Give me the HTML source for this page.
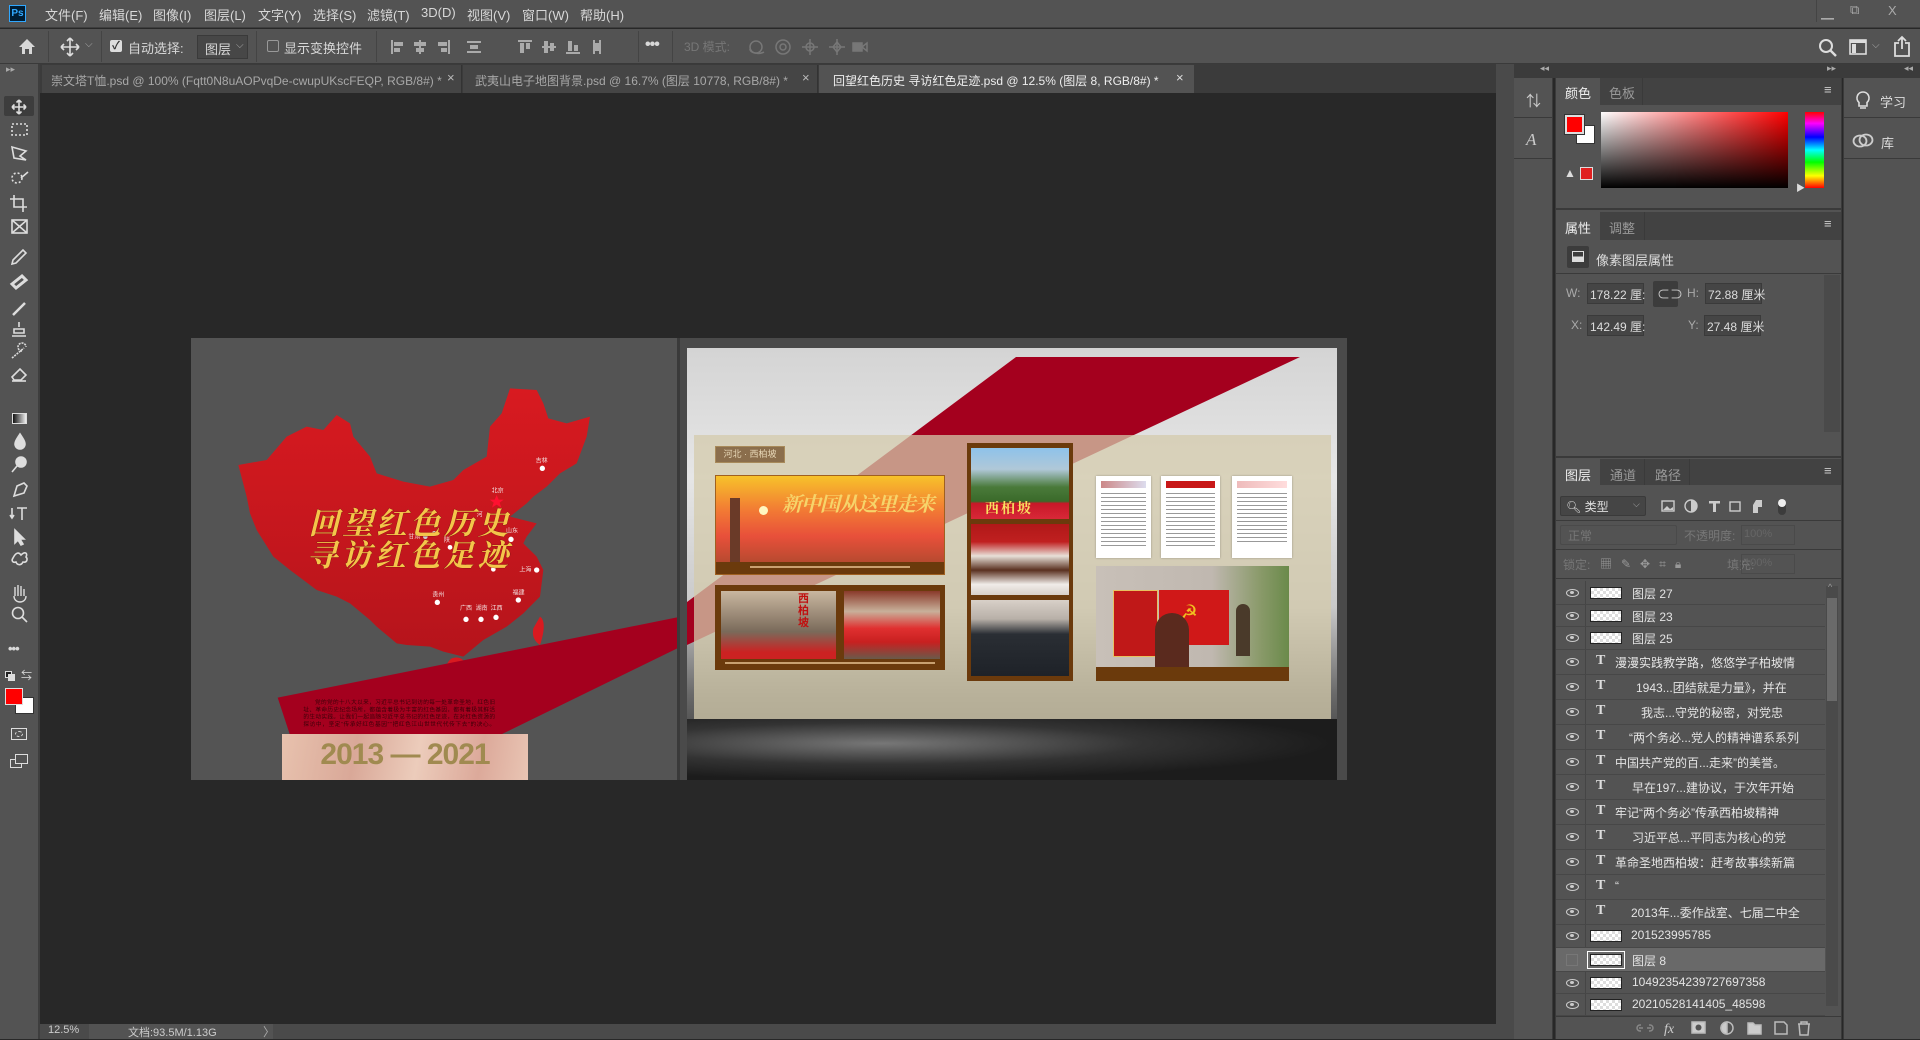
<!DOCTYPE html>
<html><head><meta charset="utf-8">
<style>
*{margin:0;padding:0;box-sizing:border-box}
body{width:1920px;height:1039px;overflow:hidden;background:#282828;font-family:"Liberation Sans","Noto Sans CJK SC",sans-serif;color:#d8d8d8;font-size:13px;position:relative}
.a{position:absolute}
.t{position:absolute;white-space:nowrap}
.tb{font-size:12px}
svg{display:block}
</style></head><body>

<!-- menu bar -->
<div class="a" style="left:0;top:0;width:1920px;height:28px;background:#535353;border-bottom:1px solid #3e3e3e"></div>
<div class="a" style="left:9px;top:5px;width:17px;height:17px;background:#001d34;border:1px solid #31a8ff;color:#31a8ff;font-size:10px;line-height:15px;text-align:center;font-weight:bold">Ps</div>
<div class="t" style="left:45px;top:5px">文件(F)</div>
<div class="t" style="left:99px;top:5px">编辑(E)</div>
<div class="t" style="left:153px;top:5px">图像(I)</div>
<div class="t" style="left:204px;top:5px">图层(L)</div>
<div class="t" style="left:258px;top:5px">文字(Y)</div>
<div class="t" style="left:313px;top:5px">选择(S)</div>
<div class="t" style="left:367px;top:5px">滤镜(T)</div>
<div class="t" style="left:421px;top:5px">3D(D)</div>
<div class="t" style="left:467px;top:5px">视图(V)</div>
<div class="t" style="left:522px;top:5px">窗口(W)</div>
<div class="t" style="left:580px;top:5px">帮助(H)</div>
<div class="a" style="left:1816px;top:0;width:98px;height:22px;border-left:1px solid #444"></div>
<div class="t" style="left:1821px;top:3px;color:#aaa">▁</div>
<div class="t" style="left:1850px;top:2px;color:#aaa;font-size:13px">⧉</div>
<div class="t" style="left:1888px;top:3px;color:#aaa">X</div>

<!-- options bar -->
<div class="a" style="left:0;top:29px;width:1920px;height:35px;background:#535353;border-bottom:1px solid #3a3a3a"></div>
<svg class="a" style="left:18px;top:38px" width="18" height="17" viewBox="0 0 18 17"><path d="M9 1 L17 9 H14 V16 H11 V11 H7 V16 H4 V9 H1 Z" fill="#d8d8d8"/></svg>
<div class="a" style="left:48px;top:31px;width:1px;height:31px;background:#444"></div>
<svg class="a" style="left:60px;top:37px" width="20" height="20" viewBox="0 0 20 20"><path d="M10 1V19M1 10H19M10 1l-3 3M10 1l3 3M10 19l-3-3M10 19l3-3M1 10l3-3M1 10l3 3M19 10l-3-3M19 10l-3 3" stroke="#ddd" stroke-width="1.6" fill="none"/></svg>
<div class="t" style="left:85px;top:39px;color:#aaa;font-size:10px">⌵</div>
<div class="a" style="left:101px;top:31px;width:1px;height:31px;background:#444"></div>
<div class="a" style="left:110px;top:40px;width:12px;height:12px;background:#ddd;border-radius:2px"></div>
<div class="t" style="left:112px;top:37px;color:#333;font-size:11px;font-weight:bold">✓</div>
<div class="t" style="left:128px;top:38px">自动选择:</div>
<div class="a" style="left:197px;top:35px;width:51px;height:24px;background:#474747;border:1px solid #3a3a3a"></div>
<div class="t" style="left:205px;top:39px">图层</div>
<div class="t" style="left:236px;top:40px;color:#aaa;font-size:10px">⌵</div>
<div class="a" style="left:256px;top:31px;width:1px;height:31px;background:#444"></div>
<div class="a" style="left:267px;top:40px;width:12px;height:12px;border:1px solid #999;border-radius:2px"></div>
<div class="t" style="left:284px;top:38px">显示变换控件</div>
<div class="a" style="left:376px;top:31px;width:1px;height:31px;background:#444"></div>
<svg class="a" style="left:388px;top:38px" width="230" height="18" viewBox="0 0 230 18" fill="#aaa">
<rect x="3" y="2" width="2" height="14"/><rect x="6" y="4" width="9" height="4"/><rect x="6" y="10" width="6" height="4"/>
<rect x="31" y="2" width="2" height="14"/><rect x="26" y="4" width="12" height="4"/><rect x="28" y="10" width="8" height="4"/>
<rect x="60" y="2" width="2" height="14"/><rect x="50" y="4" width="9" height="4"/><rect x="53" y="10" width="6" height="4"/>
<rect x="79" y="3" width="14" height="2"/><rect x="82" y="7" width="8" height="4"/><rect x="79" y="13" width="14" height="2"/>
<rect x="130" y="2" width="14" height="2"/><rect x="132" y="5" width="4" height="10"/><rect x="138" y="5" width="4" height="6"/>
<rect x="154" y="8" width="14" height="2"/><rect x="156" y="3" width="4" height="12"/><rect x="162" y="5" width="4" height="8"/>
<rect x="178" y="14" width="14" height="2"/><rect x="180" y="3" width="4" height="10"/><rect x="186" y="7" width="4" height="6"/>
<rect x="205" y="2" width="2" height="14"/><rect x="211" y="2" width="2" height="14"/><rect x="207" y="5" width="4" height="8"/>
</svg>
<div class="a" style="left:638px;top:31px;width:1px;height:31px;background:#444"></div>
<div class="t" style="left:645px;top:36px;font-size:16px;font-weight:bold;letter-spacing:-1px">•••</div>
<div class="a" style="left:672px;top:31px;width:1px;height:31px;background:#444"></div>
<div class="t" style="left:684px;top:38px;color:#777;font-size:12px">3D 模式:</div>
<svg class="a" style="left:745px;top:36px" width="125" height="22" viewBox="0 0 125 22" stroke="#777" fill="none" stroke-width="1.5">
<circle cx="11" cy="11" r="6"/><path d="M5 13a8 4 0 0 0 14 3"/>
<circle cx="38" cy="11" r="7"/><circle cx="38" cy="11" r="3"/>
<path d="M65 3V19M57 11H73"/><circle cx="65" cy="11" r="4"/>
<path d="M92 3V19M84 11H100"/><path d="M92 6l4 5-4 5-4-5z"/>
<rect x="108" y="7" width="9" height="8" fill="#777"/><path d="M117 11l5-4v8z"/>
</svg>
<svg class="a" style="left:1818px;top:38px" width="20" height="20" viewBox="0 0 20 20"><circle cx="8" cy="8" r="6" stroke="#ddd" stroke-width="2" fill="none"/><path d="M12 12l6 6" stroke="#ddd" stroke-width="2.4"/></svg>
<svg class="a" style="left:1849px;top:39px" width="18" height="16" viewBox="0 0 18 16"><rect x="1" y="1" width="16" height="14" stroke="#ddd" stroke-width="1.6" fill="none"/><rect x="1" y="1" width="16" height="3" fill="#ddd"/><rect x="3" y="5" width="4" height="9" fill="#ddd"/></svg>
<div class="t" style="left:1872px;top:40px;color:#aaa;font-size:10px">⌵</div>
<svg class="a" style="left:1893px;top:35px" width="18" height="22" viewBox="0 0 18 22"><path d="M6 8H2V21H16V8H12M9 14V2M5 6l4-4 4 4" stroke="#ddd" stroke-width="1.8" fill="none"/></svg>

<!-- tabs bar -->
<div class="a" style="left:40px;top:64px;width:1474px;height:29px;background:#3b3b3b"></div>
<div class="a" style="left:42px;top:65px;width:420px;height:28px;background:#454545;border-right:1px solid #333"></div>
<div class="t tb" style="left:51px;top:72px;color:#a8a8a8">崇文塔T恤.psd @ 100% (Fqtt0N8uAOPvqDe-cwupUKscFEQP, RGB/8#) *</div>
<div class="t" style="left:447px;top:70px;color:#bbb">×</div>
<div class="a" style="left:463px;top:65px;width:355px;height:28px;background:#454545;border-right:1px solid #333"></div>
<div class="t tb" style="left:475px;top:72px;color:#a8a8a8">武夷山电子地图背景.psd @ 16.7% (图层 10778, RGB/8#) *</div>
<div class="t" style="left:802px;top:70px;color:#bbb">×</div>
<div class="a" style="left:819px;top:65px;width:375px;height:28px;background:#535353"></div>
<div class="t tb" style="left:833px;top:72px;color:#eee">回望红色历史 寻访红色足迹.psd @ 12.5% (图层 8, RGB/8#) *</div>
<div class="t" style="left:1176px;top:70px;color:#ddd">×</div>

<!-- left toolbar -->
<div class="a" style="left:0;top:64px;width:40px;height:975px;background:#535353;border-right:2px solid #3e3e3e"></div>
<div class="t" style="left:6px;top:64px;color:#aaa;font-size:9px">▸▸</div>
<div class="a" style="left:4px;top:96px;width:30px;height:20px;background:#3d3d3d;border-radius:2px"></div>
<svg class="a" style="left:8px;top:96px" width="26" height="680" viewBox="0 0 26 680" stroke="#ddd" fill="none" stroke-width="1.6">
<path d="M11 4V18M4 11H18M11 4l-2.5 2.5M11 4l2.5 2.5M11 18l-2.5-2.5M11 18l2.5-2.5M4 11l2.5-2.5M4 11l2.5 2.5M18 11l-2.5-2.5M18 11l-2.5 2.5"/>
<rect x="4" y="28" width="15" height="11" stroke-dasharray="2 2"/>
<path d="M4 51L18 55 12 60 18 64 6 62Z"/>
<circle cx="9" cy="82" r="5" stroke-dasharray="2 2"/><path d="M13 82l7-6"/>
<path d="M6 99V111H19M2 103H15V116"/>
<rect x="4" y="124" width="15" height="13"/><path d="M4 124l15 13M19 124L4 137"/>
<path d="M5 164l10-10 3 3-10 10-4 1z"/>
<path d="M4 188l10-8 4 4-10 8z" stroke-width="3"/>
<path d="M5 219l12-12" stroke-width="2.5"/>
<path d="M11 226v5M6 233h10v4H6zM4 240h14"/>
<path d="M4 262l12-10M14 255a4 4 0 1 1 4 -4" stroke-dasharray="2 1"/>
<path d="M4 281l8-8 6 6-5 5H6z"/><path d="M4 285H18"/>
</svg>
<div class="a" style="left:12px;top:413px;width:15px;height:11px;background:linear-gradient(90deg,#111,#eee);border:1px solid #ddd"></div>
<svg class="a" style="left:8px;top:430px" width="26" height="350" viewBox="0 0 26 350" stroke="#ddd" fill="none" stroke-width="1.6">
<path d="M12 4c-4 6-5 8-5 10a5 5 0 0 0 10 0c0-2-1-4-5-10z" fill="#ddd"/>
<circle cx="13" cy="32" r="5" fill="#ddd"/><path d="M9 36l-5 6"/>
<path d="M6 66l3-10 7-3 3 3-3 7-10 3z"/>
<path d="M4 78v10M2 85l2 3 2-3M9 78h10M14 78v12"/>
<path d="M7 100v13l3-3 3 5 2-1-3-5h4z" fill="#ddd"/>
<path d="M5 128c3-6 6-6 8-3 4-4 7-2 5 2 2 2 1 6-3 5-2 4-6 3-7 0-3 1-5-1-3-4z"/>
<path d="M7 166v-9m3 9v-11m3 11v-10m3 10v-7m-10 7c0 4 3 6 6 6s6-2 6-6" stroke-width="1.4"/>
<circle cx="10" cy="183" r="5.5"/><path d="M14 187l5 5"/>
</svg>
<div class="t" style="left:8px;top:641px;font-size:13px;font-weight:bold;letter-spacing:-1px">•••</div>
<div class="a" style="left:5px;top:671px;width:7px;height:7px;border:1px solid #ddd;background:#222"></div>
<div class="a" style="left:8px;top:674px;width:7px;height:7px;border:1px solid #ddd;background:#ddd"></div>
<div class="t" style="left:21px;top:667px;font-size:11px;color:#ddd">⇆</div>
<div class="a" style="left:15px;top:697px;width:19px;height:17px;background:#fff;border:1px solid #333"></div>
<div class="a" style="left:5px;top:688px;width:18px;height:17px;background:#ff0000;border:1px solid #ddd"></div>
<div class="a" style="left:11px;top:728px;width:16px;height:12px;border:1px solid #ddd"></div>
<div class="a" style="left:15px;top:731px;width:8px;height:6px;border:1px dashed #ddd;border-radius:50%"></div>
<div class="a" style="left:10px;top:759px;width:12px;height:9px;border:1px solid #ddd"></div>
<div class="a" style="left:15px;top:754px;width:13px;height:10px;border:1px solid #ddd;background:#535353"></div>

<!-- canvas gap strip -->
<div class="a" style="left:1496px;top:64px;width:18px;height:975px;background:#4a4a4a"></div>

<!-- ===== ARTWORK LEFT PAGE ===== -->
<div class="a" style="left:191px;top:338px;width:486px;height:442px;background:#545454;overflow:hidden">
<svg class="a" style="left:-1px;top:-8px" width="500" height="450" viewBox="0 0 1500 1350">
<defs><linearGradient id="mg" x1="0" y1="0" x2="0" y2="1"><stop offset="0" stop-color="#d81a20"/><stop offset="1" stop-color="#b5141b"/></linearGradient></defs>
<path d="M145 405L230 390 290 320 350 290 400 300 440 255 480 280 490 320 540 380 560 430 640 455 720 470 790 450 820 420 890 380 900 290 935 250 960 175 1040 180 1060 220 1075 265 1130 280 1200 260 1190 320 1160 400 1110 430 1070 470 1030 500 1010 520 960 560 1000 570 1040 580 1010 620 1000 640 1040 680 1060 720 1050 800 1020 830 1000 850 950 890 880 930 820 980 760 965 720 950 650 945 620 940 560 890 540 870 480 820 440 800 380 780 300 720 250 680 200 600 180 550 170 500Z" fill="url(#mg)"/>
<path d="M1050 860c15 10 15 40 0 85-15-10-25-25-20-50z" fill="#d81a20"/>
<path d="M785 985c30-10 45 10 40 35-10 20-40 25-55 10-5-15 0-35 15-45z" fill="#d81a20"/>
<path d="M263 1103L1462 862 1462 955 930 1215 300 1215Z" fill="#a4001e"/>
<path d="M1462 835L1500 820 1500 930 1462 950Z" fill="#a4001e"/>
<g font-family="Liberation Sans,Noto Sans CJK SC,sans-serif" font-size="18" fill="#f3dede">
<text x="1037" y="398">吉林</text><text x="905" y="488">北京</text><text x="860" y="560">河</text><text x="948" y="608">山东</text><text x="988" y="724">上海</text><text x="968" y="794">福建</text><text x="727" y="800">贵州</text><text x="810" y="840">广西</text><text x="857" y="840">湖南</text><text x="902" y="840">江西</text><text x="655" y="626">甘肃</text><text x="762" y="636">陕</text>
</g>
<g fill="#fff"><circle cx="1057" cy="415" r="8"/><circle cx="963" cy="628" r="8"/><circle cx="1040" cy="720" r="8"/><circle cx="910" cy="718" r="7"/><circle cx="985" cy="810" r="8"/><circle cx="742" cy="817" r="8"/><circle cx="828" cy="868" r="8"/><circle cx="873" cy="868" r="8"/><circle cx="918" cy="862" r="8"/><circle cx="706" cy="620" r="7" fill="#ccc"/><circle cx="733" cy="610" r="7" fill="#ccc"/><circle cx="780" cy="652" r="7"/></g>
<path d="M920 495l6 14h15l-12 9 5 15-14-9-14 9 5-15-12-9h15z" fill="#ff1030"/>
<g font-family="Liberation Serif,Noto Serif CJK SC,serif" font-size="92" font-weight="bold" font-style="italic" fill="#f4c54a" stroke="#7a1010" stroke-width="2" paint-order="stroke">
<text x="355" y="612" textLength="600">回望红色历史</text>
<text x="350" y="708" textLength="605">寻访红色足迹</text>
</g>
<g font-family="Liberation Sans,Noto Sans CJK SC,sans-serif" font-size="17" fill="#3a0008">
<text x="375" y="1122" textLength="540">党的党的十八大以来，习近平总书记到访的每一处革命圣地，红色旧</text>
<text x="340" y="1144" textLength="575">址、革命历史纪念场所，都蕴含着极为丰富的红色基因，都有着极其鲜活</text>
<text x="340" y="1166" textLength="575">的生动实践。让我们一起追随习近平总书记的红色足迹，在对红色资源的</text>
<text x="340" y="1188" textLength="575">探访中，坚定“传承好红色基因”“把红色江山世世代代传下去”的决心。</text>
</g>
</svg>
<div class="a" style="left:91px;top:396px;width:246px;height:46px;background:linear-gradient(100deg,#e8c2ae,#d9a898 30%,#ecccbb 55%,#dca99a 80%,#e9c5b4);"></div>
<div class="t" style="left:91px;top:400px;width:246px;text-align:center;font-family:'Liberation Sans Narrow','Liberation Sans',sans-serif;font-weight:bold;font-size:30px;color:#a08a50;letter-spacing:-1px">2013 — 2021</div>
</div>
<div class="a" style="left:677px;top:338px;width:3px;height:442px;background:#3a3a3a"></div>

<!-- ===== ARTWORK RIGHT PAGE ===== -->
<div class="a" style="left:680px;top:338px;width:667px;height:442px;background:#4a4a4a;overflow:hidden">
 <div class="a" style="left:7px;top:10px;width:650px;height:432px;background:linear-gradient(180deg,#d4d4d4 0%,#e6e6e6 30%,#c9c9c9 60%,#6a6a6a 80%,#2a2a2a 100%)"></div>
 <div class="a" style="left:7px;top:381px;width:650px;height:61px;background:radial-gradient(ellipse at 30% 40%,#777 0%,#333 40%,#1c1c1c 70%),#222"></div>
 <svg class="a" style="left:0;top:0" width="667" height="442"><path d="M336 19L620 19 7 307 7 264Z" fill="#a4001e"/></svg>
 <div class="a" style="left:14px;top:97px;width:637px;height:284px;background:rgba(212,202,172,0.74)"></div>
 <div class="a" style="left:35px;top:108px;width:70px;height:17px;background:#8b6e4c;border:1px solid #a88a5a;color:#e8d8b8;font-size:9px;line-height:15px;text-align:center">河北 · 西柏坡</div>
 <div class="a" style="left:35px;top:137px;width:230px;height:100px;background:#6b3a0c;border:1px solid #a06020"></div>
 <div class="a" style="left:36px;top:138px;width:228px;height:86px;background:linear-gradient(180deg,#f7c22a 0%,#f27a34 40%,#e8503a 70%,#b84a30 100%)"></div>
 <div class="a" style="left:79px;top:168px;width:9px;height:9px;border-radius:50%;background:#fff7c0"></div>
 <div class="a" style="left:50px;top:160px;width:10px;height:64px;background:#6a3a28"></div>
 <div class="t" style="left:102px;top:150px;color:#f6d46a;font-family:'Liberation Serif','Noto Serif CJK SC',serif;font-style:italic;font-weight:bold;font-size:20px;letter-spacing:-1px">新中国从这里走来</div>
 <div class="a" style="left:70px;top:228px;width:160px;height:2px;background:#caa070"></div>
 <div class="a" style="left:35px;top:247px;width:230px;height:85px;background:#6b3a0c"></div>
 <div class="a" style="left:41px;top:253px;width:115px;height:68px;background:linear-gradient(180deg,#c9b7a0,#7a6a5a 60%,#c22 90%)"></div>
 <div class="t" style="left:118px;top:255px;color:#c01010;font-weight:bold;font-size:11px;line-height:12px;width:12px;white-space:normal">西柏坡</div>
 <div class="a" style="left:164px;top:253px;width:96px;height:68px;background:linear-gradient(180deg,#8a3a2a 0%,#c8b09a 30%,#e03030 55%,#c82020 75%,#6a5a4a 100%)"></div>
 <div class="a" style="left:45px;top:324px;width:210px;height:2px;background:#c8a070"></div>
 <div class="a" style="left:287px;top:105px;width:106px;height:238px;background:#6b3a0c"></div>
 <div class="a" style="left:291px;top:110px;width:98px;height:71px;background:linear-gradient(180deg,#8ec2ea 0%,#b0c8d8 30%,#4a7a3a 55%,#3a6a2a 75%,#c81828 78%,#d82838 100%)"></div>
 <div class="t" style="left:305px;top:160px;color:#f8e060;font-weight:bold;font-size:14px;letter-spacing:2px;font-family:'Liberation Serif','Noto Serif CJK SC',serif">西柏坡</div>
 <div class="a" style="left:291px;top:186px;width:98px;height:71px;background:linear-gradient(180deg,#b01818 0%,#c02020 25%,#e8e0d8 45%,#5a3020 65%,#f0ece8 85%,#d8d0c8 100%)"></div>
 <div class="a" style="left:291px;top:262px;width:98px;height:76px;background:linear-gradient(180deg,#d8d0c8 0%,#b8b0a8 25%,#2a2e34 45%,#1e2228 100%)"></div>
 <div class="a" style="left:416px;top:138px;width:55px;height:82px;background:#fff;box-shadow:0 0 2px rgba(0,0,0,.3)"></div>
 <div class="a" style="left:421px;top:143px;width:45px;height:7px;background:linear-gradient(90deg,#c88,#dde)"></div>
 <div class="a" style="left:421px;top:155px;width:45px;height:55px;background:repeating-linear-gradient(180deg,#999 0 1px,transparent 1px 4px)"></div>
 <div class="a" style="left:481px;top:138px;width:59px;height:82px;background:#fff;box-shadow:0 0 2px rgba(0,0,0,.3)"></div>
 <div class="a" style="left:486px;top:143px;width:49px;height:7px;background:#c81818"></div>
 <div class="a" style="left:486px;top:155px;width:49px;height:55px;background:repeating-linear-gradient(180deg,#999 0 1px,transparent 1px 4px)"></div>
 <div class="a" style="left:552px;top:138px;width:60px;height:82px;background:#fff;box-shadow:0 0 2px rgba(0,0,0,.3)"></div>
 <div class="a" style="left:557px;top:143px;width:50px;height:7px;background:linear-gradient(90deg,#ebb,#fdd)"></div>
 <div class="a" style="left:557px;top:155px;width:50px;height:50px;background:repeating-linear-gradient(180deg,#999 0 1px,transparent 1px 4px)"></div>
 <div class="a" style="left:416px;top:228px;width:193px;height:115px;background:#6b3a0c"></div>
 <div class="a" style="left:416px;top:228px;width:193px;height:101px;background:linear-gradient(90deg,#c8c0b8 0%,#c0b8b0 60%,#8a9a6a 85%,#6a8a4a 100%)"></div>
 <div class="a" style="left:433px;top:252px;width:45px;height:67px;background:#c01818;border:1px solid #e8c060"></div>
 <div class="a" style="left:479px;top:252px;width:70px;height:55px;background:#d01818"></div>
 <div class="t" style="left:500px;top:262px;color:#f0c020;font-size:20px">☭</div>
 <div class="a" style="left:475px;top:275px;width:34px;height:54px;background:#5a2a1e;border-radius:17px 17px 0 0"></div>
 <div class="a" style="left:556px;top:266px;width:14px;height:52px;background:#4a3a2a;border-radius:7px 7px 0 0"></div>
</div>

<!-- status bar -->
<div class="a" style="left:40px;top:1024px;width:1456px;height:15px;background:#4a4a4a"></div>
<div class="a" style="left:89px;top:1024px;width:184px;height:15px;background:#535353"></div>
<div class="t" style="left:48px;top:1024px;font-size:11px;color:#ccc">12.5%</div>
<div class="t" style="left:128px;top:1024px;font-size:11px;color:#ccc">文档:93.5M/1.13G</div>
<div class="t" style="left:263px;top:1023px;font-size:12px;color:#aaa">〉</div>

<!-- narrow dock -->
<div class="a" style="left:1514px;top:64px;width:406px;height:14px;background:#3b3b3b"></div>
<div class="t" style="left:1540px;top:63px;font-size:9px;color:#aaa">◂◂</div>
<div class="t" style="left:1827px;top:63px;font-size:9px;color:#aaa">▸▸</div>
<div class="t" style="left:1904px;top:63px;font-size:9px;color:#aaa">◂◂</div>
<div class="a" style="left:1514px;top:78px;width:39px;height:961px;background:#535353;border-right:1px solid #3a3a3a"></div>
<div class="a" style="left:1514px;top:117px;width:39px;height:1px;background:#3a3a3a"></div>
<div class="a" style="left:1514px;top:158px;width:39px;height:1px;background:#3a3a3a"></div>
<div class="t" style="left:1526px;top:90px;font-size:15px;color:#ccc">⇅</div>
<div class="t" style="left:1526px;top:130px;font-size:17px;color:#ccc;font-family:'Liberation Serif',serif;font-style:italic">A</div>

<!-- right dock -->
<div class="a" style="left:1843px;top:78px;width:77px;height:961px;background:#535353;border-left:1px solid #3a3a3a"></div>
<div class="a" style="left:1843px;top:117px;width:77px;height:1px;background:#3a3a3a"></div>
<div class="a" style="left:1843px;top:158px;width:77px;height:1px;background:#3a3a3a"></div>
<svg class="a" style="left:1855px;top:91px" width="16" height="20" viewBox="0 0 16 20"><path d="M8 1a6 6 0 0 0-4 10.5V15h8v-3.5A6 6 0 0 0 8 1zM5 17h6" stroke="#ddd" stroke-width="1.6" fill="none"/></svg>
<div class="t" style="left:1880px;top:92px;color:#ddd">学习</div>
<svg class="a" style="left:1852px;top:133px" width="22" height="15" viewBox="0 0 22 15"><ellipse cx="8" cy="8" rx="6.5" ry="5.5" stroke="#ccc" stroke-width="1.8" fill="none"/><ellipse cx="14" cy="7" rx="6.5" ry="5.5" stroke="#ccc" stroke-width="1.8" fill="none"/></svg>
<div class="t" style="left:1881px;top:133px;color:#ddd">库</div>

<!-- main panel column -->
<div class="a" style="left:1555px;top:78px;width:287px;height:961px;background:#535353;border-left:1px solid #3a3a3a;border-right:1px solid #3a3a3a"></div>
<div class="a" style="left:1556px;top:78px;width:285px;height:27px;background:#424242"></div>
<div class="a" style="left:1556px;top:78px;width:44px;height:27px;background:#535353"></div>
<div class="t" style="left:1565px;top:83px;color:#eee">颜色</div>
<div class="t" style="left:1609px;top:83px;color:#999">色板</div>
<div class="a" style="left:1642px;top:78px;width:1px;height:27px;background:#3a3a3a"></div>
<div class="t" style="left:1824px;top:82px;color:#ccc;font-size:13px">≡</div>
<div class="a" style="left:1576px;top:125px;width:19px;height:19px;background:#fff;border:1px solid #333"></div>
<div class="a" style="left:1565px;top:115px;width:19px;height:19px;background:#ff0000;border:2px solid #ddd;outline:1px solid #333"></div>
<div class="t" style="left:1564px;top:166px;color:#ddd;font-size:12px">▲</div>
<div class="a" style="left:1580px;top:167px;width:13px;height:13px;background:#e02020;border:1px solid #ddd"></div>
<div class="a" style="left:1601px;top:112px;width:187px;height:76px;background:linear-gradient(0deg,#000,rgba(0,0,0,0)),linear-gradient(90deg,#fff,#ff0000)"></div>
<div class="a" style="left:1805px;top:112px;width:19px;height:76px;background:linear-gradient(180deg,#f00,#f0f 15%,#00f 33%,#0ff 50%,#0f0 66%,#ff0 84%,#f00)"></div>
<div class="t" style="left:1796px;top:181px;color:#ddd;font-size:9px">▶</div>
<div class="a" style="left:1556px;top:208px;width:285px;height:2px;background:#3a3a3a"></div>
<div class="a" style="left:1556px;top:212px;width:285px;height:28px;background:#424242"></div>
<div class="a" style="left:1556px;top:212px;width:44px;height:28px;background:#535353"></div>
<div class="t" style="left:1565px;top:218px;color:#eee">属性</div>
<div class="t" style="left:1609px;top:218px;color:#999">调整</div>
<div class="a" style="left:1644px;top:212px;width:1px;height:28px;background:#3a3a3a"></div>
<div class="t" style="left:1824px;top:216px;color:#ccc;font-size:13px">≡</div>
<div class="a" style="left:1567px;top:246px;width:22px;height:22px;background:#3c3c3c;border-radius:2px"></div>
<div class="a" style="left:1572px;top:251px;width:12px;height:11px;border:1px solid #ddd;background:linear-gradient(180deg,transparent 50%,#ddd 50%)"></div>
<div class="t" style="left:1596px;top:250px;color:#ddd">像素图层属性</div>
<div class="a" style="left:1556px;top:273px;width:285px;height:1px;background:#3a3a3a"></div>
<div class="a" style="left:1824px;top:275px;width:16px;height:157px;background:#4a4a4a"></div>
<div class="t" style="left:1566px;top:286px;color:#aaa;font-size:12px">W:</div>
<div class="a" style="left:1587px;top:283px;width:57px;height:21px;background:#454545;border:1px solid #3a3a3a"></div>
<div class="t" style="left:1590px;top:286px;font-size:12px;color:#ddd">178.22 厘:</div>
<div class="a" style="left:1653px;top:281px;width:25px;height:26px;background:#3c3c3c;border-radius:2px"></div>
<div class="t" style="left:1657px;top:284px;font-size:13px;color:#ccc">⊂⊃</div>
<div class="t" style="left:1687px;top:286px;color:#aaa;font-size:12px">H:</div>
<div class="a" style="left:1705px;top:283px;width:57px;height:21px;background:#454545;border:1px solid #3a3a3a"></div>
<div class="t" style="left:1708px;top:286px;font-size:12px;color:#ddd">72.88 厘米</div>
<div class="t" style="left:1571px;top:318px;color:#aaa;font-size:12px">X:</div>
<div class="a" style="left:1587px;top:315px;width:57px;height:21px;background:#454545;border:1px solid #3a3a3a"></div>
<div class="t" style="left:1590px;top:318px;font-size:12px;color:#ddd">142.49 厘:</div>
<div class="t" style="left:1688px;top:318px;color:#aaa;font-size:12px">Y:</div>
<div class="a" style="left:1704px;top:315px;width:57px;height:21px;background:#454545;border:1px solid #3a3a3a"></div>
<div class="t" style="left:1707px;top:318px;font-size:12px;color:#ddd">27.48 厘米</div>
<div class="a" style="left:1556px;top:456px;width:285px;height:2px;background:#3a3a3a"></div>

<!-- layers panel -->
<div class="a" style="left:1556px;top:459px;width:285px;height:26px;background:#424242"></div>
<div class="a" style="left:1556px;top:459px;width:44px;height:26px;background:#535353"></div>
<div class="t" style="left:1565px;top:465px;color:#eee">图层</div>
<div class="t" style="left:1610px;top:465px;color:#999">通道</div>
<div class="t" style="left:1655px;top:465px;color:#999">路径</div>
<div class="a" style="left:1644px;top:459px;width:1px;height:26px;background:#3a3a3a"></div>
<div class="a" style="left:1689px;top:459px;width:1px;height:26px;background:#3a3a3a"></div>
<div class="t" style="left:1824px;top:463px;color:#ccc;font-size:13px">≡</div>
<div class="a" style="left:1560px;top:496px;width:86px;height:20px;background:#454545;border:1px solid #3a3a3a;border-radius:2px"></div>
<div class="t" style="left:1566px;top:498px;font-size:12px;color:#ddd">🔍︎ 类型</div>
<div class="t" style="left:1633px;top:499px;font-size:9px;color:#aaa">⌵</div>
<svg class="a" style="left:1660px;top:497px" width="140" height="20" viewBox="0 0 140 20" fill="#ccc">
<rect x="2" y="4" width="12" height="10" stroke="#ccc" fill="none" stroke-width="1.4"/><path d="M3 13l4-4 3 3 3-2v3z"/>
<circle cx="31" cy="9" r="6" stroke="#ccc" fill="none" stroke-width="1.4"/><path d="M31 3a6 6 0 0 1 0 12z"/>
<path d="M49 4h11v2.5h-4V15h-3V6.5h-4z"/>
<rect x="70" y="5" width="10" height="9" stroke="#ccc" fill="none" stroke-width="1.4"/>
<path d="M96 3h6v7h-4v6h-5V8z" fill="#ccc"/>
<rect x="118" y="2" width="8" height="16" rx="4" fill="#3c3c3c"/><circle cx="122" cy="6" r="4" fill="#eee"/>
</svg>
<div class="a" style="left:1556px;top:520px;width:285px;height:1px;background:#3a3a3a"></div>
<div class="a" style="left:1560px;top:525px;width:117px;height:20px;border:1px solid #4a4a4a;border-radius:2px"></div>
<div class="t" style="left:1568px;top:527px;font-size:12px;color:#777">正常</div>
<div class="t" style="left:1684px;top:527px;font-size:12px;color:#777">不透明度:</div>
<div class="a" style="left:1741px;top:525px;width:54px;height:20px;border:1px solid #4a4a4a"></div>
<div class="t" style="left:1744px;top:528px;font-size:11px;color:#666">100%</div>
<div class="a" style="left:1556px;top:549px;width:285px;height:1px;background:#3a3a3a"></div>
<div class="t" style="left:1563px;top:556px;font-size:12px;color:#777">锁定:</div>
<div class="t" style="left:1600px;top:555px;font-size:12px;color:#999;letter-spacing:9px">▦✎✥⌗🔒︎</div>
<div class="t" style="left:1727px;top:556px;font-size:12px;color:#777">填充:</div>
<div class="a" style="left:1741px;top:554px;width:54px;height:20px;border:1px solid #4a4a4a"></div>
<div class="t" style="left:1744px;top:557px;font-size:11px;color:#666">100%</div>
<div class="a" style="left:1556px;top:578px;width:285px;height:1px;background:#3a3a3a"></div>

<div class="a" style="left:1556px;top:581px;width:269px;height:435px;background:#535353"></div>
<div class="a" style="left:1585px;top:581px;width:1px;height:435px;background:#454545"></div>
<div class="a" style="left:1826px;top:586px;width:12px;height:420px;background:#4a4a4a"></div>
<div class="a" style="left:1827px;top:598px;width:10px;height:103px;background:#6a6a6a"></div>
<div class="t" style="left:1828px;top:582px;font-size:9px;color:#999">^</div>

<style>
.row{position:absolute;left:1556px;width:269px;border-bottom:1px solid #474747;font-size:12px;color:#e4e4e4}
.row .eye{position:absolute;left:10px;top:50%;margin-top:-4px;width:13px;height:8px;border:1.5px solid #ccc;border-radius:50%}
.row .eye:after{content:"";position:absolute;left:3px;top:1px;width:4px;height:3px;background:#ccc;border-radius:50%}
.row .th{position:absolute;left:34px;top:50%;margin-top:-6px;width:32px;height:12px;border:1px solid #222;background:repeating-conic-gradient(#ddd 0 25%,#fff 0 50%) 0 0/6px 6px}
.row .T{position:absolute;left:40px;top:50%;margin-top:-9px;font-family:"Liberation Serif",serif;font-weight:bold;font-size:14px;color:#ddd}
.row .n{position:absolute;top:50%;margin-top:-8px;white-space:nowrap}
</style>
<div class="row" style="top:582px;height:23px"><div class="eye"></div><div class="th"></div><div class="n" style="left:76px">图层 27</div></div>
<div class="row" style="top:605px;height:22px"><div class="eye"></div><div class="th"></div><div class="n" style="left:76px">图层 23</div></div>
<div class="row" style="top:627px;height:23px"><div class="eye"></div><div class="th"></div><div class="n" style="left:76px">图层 25</div></div>
<div class="row" style="top:650px;height:25px"><div class="eye"></div><div class="T">T</div><div class="n" style="left:59px">漫漫实践教学路，悠悠学子柏坡情</div></div>
<div class="row" style="top:675px;height:25px"><div class="eye"></div><div class="T">T</div><div class="n" style="left:80px">1943...团结就是力量》，并在</div></div>
<div class="row" style="top:700px;height:25px"><div class="eye"></div><div class="T">T</div><div class="n" style="left:85px">我志...守党的秘密，对党忠</div></div>
<div class="row" style="top:725px;height:25px"><div class="eye"></div><div class="T">T</div><div class="n" style="left:73px">“两个务必...党人的精神谱系系列</div></div>
<div class="row" style="top:750px;height:25px"><div class="eye"></div><div class="T">T</div><div class="n" style="left:59px">中国共产党的百...走来”的美誉。</div></div>
<div class="row" style="top:775px;height:25px"><div class="eye"></div><div class="T">T</div><div class="n" style="left:76px">早在197...建协议，于次年开始</div></div>
<div class="row" style="top:800px;height:25px"><div class="eye"></div><div class="T">T</div><div class="n" style="left:59px">牢记“两个务必”传承西柏坡精神</div></div>
<div class="row" style="top:825px;height:25px"><div class="eye"></div><div class="T">T</div><div class="n" style="left:76px">习近平总...平同志为核心的党</div></div>
<div class="row" style="top:850px;height:25px"><div class="eye"></div><div class="T">T</div><div class="n" style="left:59px">革命圣地西柏坡：赶考故事续新篇</div></div>
<div class="row" style="top:875px;height:25px"><div class="eye"></div><div class="T">T</div><div class="n" style="left:59px">“</div></div>
<div class="row" style="top:900px;height:25px"><div class="eye"></div><div class="T">T</div><div class="n" style="left:75px">2013年...委作战室、七届二中全</div></div>
<div class="row" style="top:925px;height:23px"><div class="eye"></div><div class="th"></div><div class="n" style="left:75px">201523995785</div></div>
<div class="row" style="top:948px;height:24px;background:#696969"><div style="position:absolute;left:10px;top:6px;width:12px;height:12px;border:1px solid #777"></div><div class="th" style="outline:1px solid #fff;outline-offset:2px"></div><div class="n" style="left:76px">图层 8</div></div>
<div class="row" style="top:972px;height:22px"><div class="eye"></div><div class="th"></div><div class="n" style="left:76px">10492354239727697358</div></div>
<div class="row" style="top:994px;height:22px"><div class="eye"></div><div class="th"></div><div class="n" style="left:76px">20210528141405_48598</div></div>
<div class="a" style="left:1556px;top:1016px;width:285px;height:1px;background:#3a3a3a"></div>
<svg class="a" style="left:1636px;top:1018px" width="180" height="20" viewBox="0 0 180 20" stroke="#bbb" fill="none" stroke-width="1.5">
<path d="M3 10h4M11 10h4M5 7h-1a3 3 0 0 0 0 6h1M13 7h1a3 3 0 0 1 0 6h-1" stroke="#888"/>
<text x="28" y="15" font-family="Liberation Serif,serif" font-style="italic" font-size="14" fill="#ccc" stroke="none">fx</text>
<rect x="56" y="4" width="13" height="11" fill="#ccc"/><circle cx="62.5" cy="9.5" r="3" fill="#535353" stroke="none"/>
<circle cx="91" cy="10" r="6"/><path d="M91 4a6 6 0 0 0 0 12z" fill="#ccc"/>
<path d="M112 5h5l2 2h6v9h-13z" fill="#ccc"/>
<path d="M139 4h9l3 3v9h-12z"/>
<path d="M162 6h12M165 6V4h6v2M163 6l1 11h8l1-11"/>
</svg>
</body></html>
